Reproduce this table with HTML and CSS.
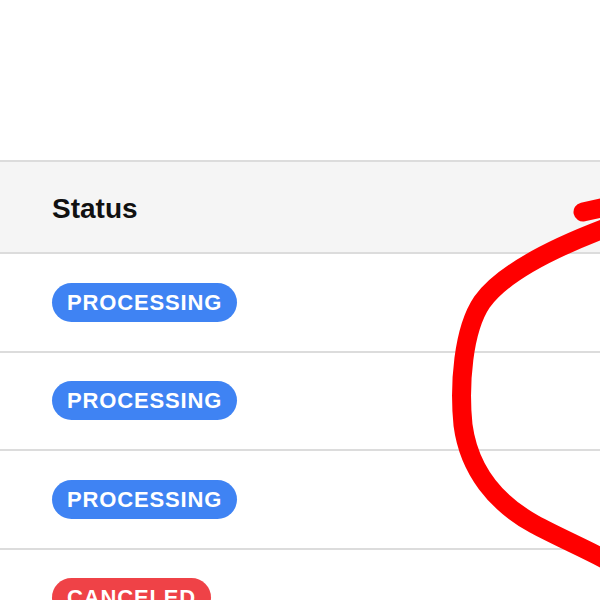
FILE: index.html
```html
<!DOCTYPE html>
<html lang="en">
<head>
    <meta charset="UTF-8">
    <title>Orders</title>
    <link rel="stylesheet" href="styles.css">
</head>
<body>
    <div class="page">
        <div class="orders">
            <div class="orders-head">Status</div>
            <div class="orders-row"><span class="badge badge-processing">PROCESSING</span></div>
            <div class="orders-row"><span class="badge badge-processing">PROCESSING</span></div>
            <div class="orders-row"><span class="badge badge-processing">PROCESSING</span></div>
            <div class="orders-row"><span class="badge badge-canceled">CANCELED</span></div>
        </div>

        <!-- hand-drawn highlight on top of the table -->
        <svg class="scribble" width="600" height="600" viewBox="0 0 600 600">
            <path d="M583 212 L606 207" />
            <path d="M606 228 C 548 250, 502 274, 482 302 C 463 330, 459 385, 463 425 C 469 470, 496 503, 534 524 C 558 537, 586 549, 610 562" />
        </svg>
    </div>
</body>
</html>
```

FILE: styles.css
```css
:root {
    --line: #dcdcdc;
    --head-bg: #f5f5f5;
    --blue: #3f83f3;
    --red: #ef4247;
}

* {
    box-sizing: border-box;
    margin: 0;
    padding: 0;
}

body {
    background: #fff;
    font-family: 'Liberation Sans', Arial, sans-serif;
    overflow: hidden;
}

.page {
    position: relative;
    width: 600px;
    height: 600px;
    padding-top: 160px;
}

.orders {
    border-top: 2px solid var(--line);
}

.orders-head {
    height: 92px;
    padding: 3px 0 0 52px;
    display: flex;
    align-items: center;
    background: var(--head-bg);
    border-bottom: 2px solid var(--line);
    font-size: 28px;
    font-weight: 700;
    color: #111;
}

.orders-row {
    height: 98.5px;
    padding-left: 52px;
    display: flex;
    align-items: center;
    border-bottom: 2px solid var(--line);
}

.badge {
    display: inline-block;
    height: 39px;
    line-height: 39px;
    padding: 0 15px;
    border-radius: 20px;
    font-size: 22px;
    font-weight: 700;
    letter-spacing: 0.85px;
    color: #fff;
}

.badge-processing {
    background: var(--blue);
}

.badge-canceled {
    background: var(--red);
}

.scribble {
    position: absolute;
    top: 0;
    left: 0;
    pointer-events: none;
}

.scribble path {
    fill: none;
    stroke: #ff0000;
    stroke-width: 19;
    stroke-linecap: round;
    stroke-linejoin: round;
}
```
